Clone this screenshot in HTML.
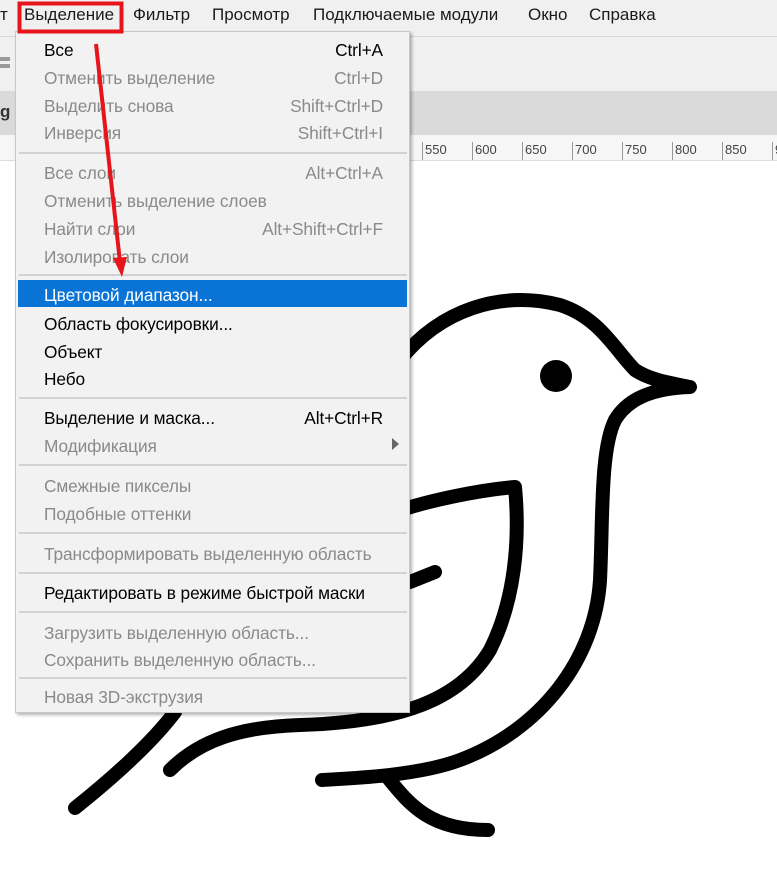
<!DOCTYPE html>
<html><head><meta charset="utf-8"><style>
*{margin:0;padding:0;box-sizing:border-box}
body{width:777px;height:892px;overflow:hidden;background:#fff;font-family:"Liberation Sans","DejaVu Sans",sans-serif;position:relative}
.bar{position:absolute;left:0;top:0;width:777px;height:36px;background:#f0f0f0}
.bar span{position:absolute;top:5px;font-size:17px;color:#1a1a1a}
.opt{position:absolute;left:0;top:36px;width:777px;height:55px;background:#f0f0f0;border-top:1px solid #d8d8d8}
.tabs{position:absolute;left:0;top:91px;width:777px;height:44px;background:#dadada}
.ruler{position:absolute;left:0;top:135px;width:777px;height:26px;background:#f6f6f6;border-bottom:1px solid #ddd}
.ruler span{position:absolute;top:7px;font-size:13px;color:#444;border-left:1px solid #999;padding-left:2px;height:18px}
.menu{position:absolute;left:15px;top:31px;width:395px;height:682px;background:#f2f2f2;border:1px solid #c8c8c8;box-shadow:2px 2px 3px rgba(0,0,0,.3)}
.it{position:absolute;left:0;width:393px;height:27px;font-size:17.3px;color:#000;letter-spacing:-0.1px}
.it .l{position:absolute;left:28px;top:5px}
.it .r{position:absolute;right:26px;top:5px}
.d{color:#8a8a8a}
.hl{background:#0a74d6;color:#fff;left:2px;width:389px}
.sep{position:absolute;left:3px;width:388px;height:2px;background:#d2d2d2}
</style></head><body>
<div class="bar">
<span style="left:0">т</span><span style="left:24px">Выделение</span><span style="left:133px">Фильтр</span><span style="left:212px">Просмотр</span><span style="left:313px">Подключаемые модули</span><span style="left:528px">Окно</span><span style="left:589px">Справка</span>
</div>
<div class="opt"><div style="position:absolute;left:0;top:20px;width:10px;height:4px;background:#999"></div><div style="position:absolute;left:0;top:27px;width:10px;height:4px;background:#999"></div></div>
<div class="tabs"><span style="position:absolute;left:0;top:11px;font-weight:bold;font-size:17px;color:#333">g</span></div>
<div class="ruler">
<span style="left:422px">550</span><span style="left:472px">600</span><span style="left:522px">650</span><span style="left:572px">700</span><span style="left:622px">750</span><span style="left:672px">800</span><span style="left:722px">850</span><span style="left:772px">9</span>
</div>
<svg style="position:absolute;left:0;top:0" width="777" height="892">
<g fill="none" stroke="#000" stroke-width="14" stroke-linecap="round" stroke-linejoin="round">
<path d="M400,360 C440,310 500,290 560,305 C600,318 615,350 635,370 C650,380 670,383 690,387 C660,388 630,395 615,420 C600,450 603,520 600,580 C595,660 540,730 460,760 C420,775 360,778 322,780"/>
<path d="M395,512 C430,500 480,490 515,487 C520,540 515,600 490,650 C460,700 400,722 300,725 C240,727 200,740 170,770"/>
<path d="M175,712 C150,745 110,780 75,808"/>
<path d="M410,582 L435,572"/>
<path d="M388,778 C410,805 430,830 488,830"/>
</g>
<circle cx="556" cy="376" r="16" fill="#000"/>
</svg>
<div class="menu">
<div class="it" style="top:3px"><span class="l">Все</span><span class="r">Ctrl+A</span></div>
<div class="it d" style="top:31px"><span class="l">Отменить выделение</span><span class="r">Ctrl+D</span></div>
<div class="it d" style="top:59px"><span class="l">Выделить снова</span><span class="r">Shift+Ctrl+D</span></div>
<div class="it d" style="top:86px"><span class="l">Инверсия</span><span class="r">Shift+Ctrl+I</span></div>
<div class="sep" style="top:120px"></div>
<div class="it d" style="top:126px"><span class="l">Все слои</span><span class="r">Alt+Ctrl+A</span></div>
<div class="it d" style="top:154px"><span class="l">Отменить выделение слоев</span></div>
<div class="it d" style="top:182px"><span class="l">Найти слои</span><span class="r">Alt+Shift+Ctrl+F</span></div>
<div class="it d" style="top:210px"><span class="l">Изолировать слои</span></div>
<div class="sep" style="top:242px"></div>
<div class="it hl" style="top:248px"><span class="l" style="left:26px">Цветовой диапазон...</span></div>
<div class="it" style="top:277px"><span class="l">Область фокусировки...</span></div>
<div class="it" style="top:305px"><span class="l">Объект</span></div>
<div class="it" style="top:332px"><span class="l">Небо</span></div>
<div class="sep" style="top:365px"></div>
<div class="it" style="top:371px"><span class="l">Выделение и маска...</span><span class="r">Alt+Ctrl+R</span></div>
<div class="it d" style="top:399px"><span class="l">Модификация</span><span style="position:absolute;right:10px;top:7px;border-left:7px solid #666;border-top:6px solid transparent;border-bottom:6px solid transparent"></span></div>
<div class="sep" style="top:432px"></div>
<div class="it d" style="top:439px"><span class="l">Смежные пикселы</span></div>
<div class="it d" style="top:467px"><span class="l">Подобные оттенки</span></div>
<div class="sep" style="top:500px"></div>
<div class="it d" style="top:507px"><span class="l">Трансформировать выделенную область</span></div>
<div class="sep" style="top:540px"></div>
<div class="it" style="top:546px"><span class="l">Редактировать в режиме быстрой маски</span></div>
<div class="sep" style="top:579px"></div>
<div class="it d" style="top:586px"><span class="l">Загрузить выделенную область...</span></div>
<div class="it d" style="top:613px"><span class="l">Сохранить выделенную область...</span></div>
<div class="sep" style="top:645px"></div>
<div class="it d" style="top:650px"><span class="l">Новая 3D-экструзия</span></div>
</div>
<svg style="position:absolute;left:0;top:0" width="777" height="892">
<rect x="19.5" y="3.5" width="102" height="28" fill="none" stroke="#e8141b" stroke-width="4"/>
<path d="M96,44 L120,262" stroke="#e8141b" stroke-width="4" fill="none"/>
<path d="M113,258 L122,277 L127,257 Z" fill="#e8141b"/>
</svg>
</body></html>
